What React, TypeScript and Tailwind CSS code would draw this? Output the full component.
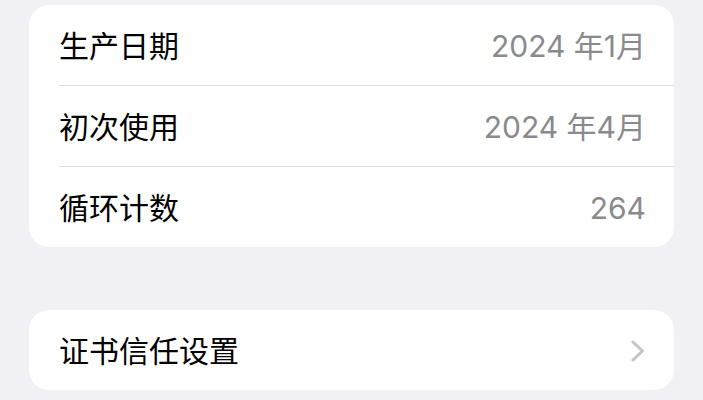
const rows = [
  { label: "生产日期", value: "2024 年1月" },
  { label: "初次使用", value: "2024 年4月" },
  { label: "循环计数", value: "264" },
];

export default function App() {
  return (
    <div
      className="w-[703px] h-[400px] overflow-hidden bg-[#f0f0f5] px-[29px] pt-[5px]"
      style={{ fontFamily: '"Inter", "Noto Sans CJK SC", sans-serif' }}
    >
      <div className="bg-white rounded-[20px] overflow-hidden">
        {rows.map((row, i) => (
          <div key={row.label} className="pl-[30px]">
            <div
              className={`flex items-center justify-between pr-[28px] pt-[1px] ${
                i < rows.length - 1
                  ? "h-[81px] border-b border-[#dcdce0]"
                  : "h-[80px]"
              }`}
            >
              <span className="text-[30px] text-black leading-none">
                {row.label}
              </span>
              <span className="text-[30px] text-[#8a8a8e] leading-none">
                {row.value}
              </span>
            </div>
          </div>
        ))}
      </div>

      <div className="mt-[63px] bg-white rounded-[20px] h-[80px] flex items-center justify-between pl-[30px] pr-[29px] pt-[1px]">
        <span className="text-[30px] text-black leading-none">证书信任设置</span>
        <svg width="14" height="22" viewBox="0 0 14 22" fill="none">
          <polyline
            points="2,2 11.5,11 2,20"
            stroke="#c4c4c7"
            strokeWidth="3"
            strokeLinecap="round"
            strokeLinejoin="round"
          />
        </svg>
      </div>
    </div>
  );
}
